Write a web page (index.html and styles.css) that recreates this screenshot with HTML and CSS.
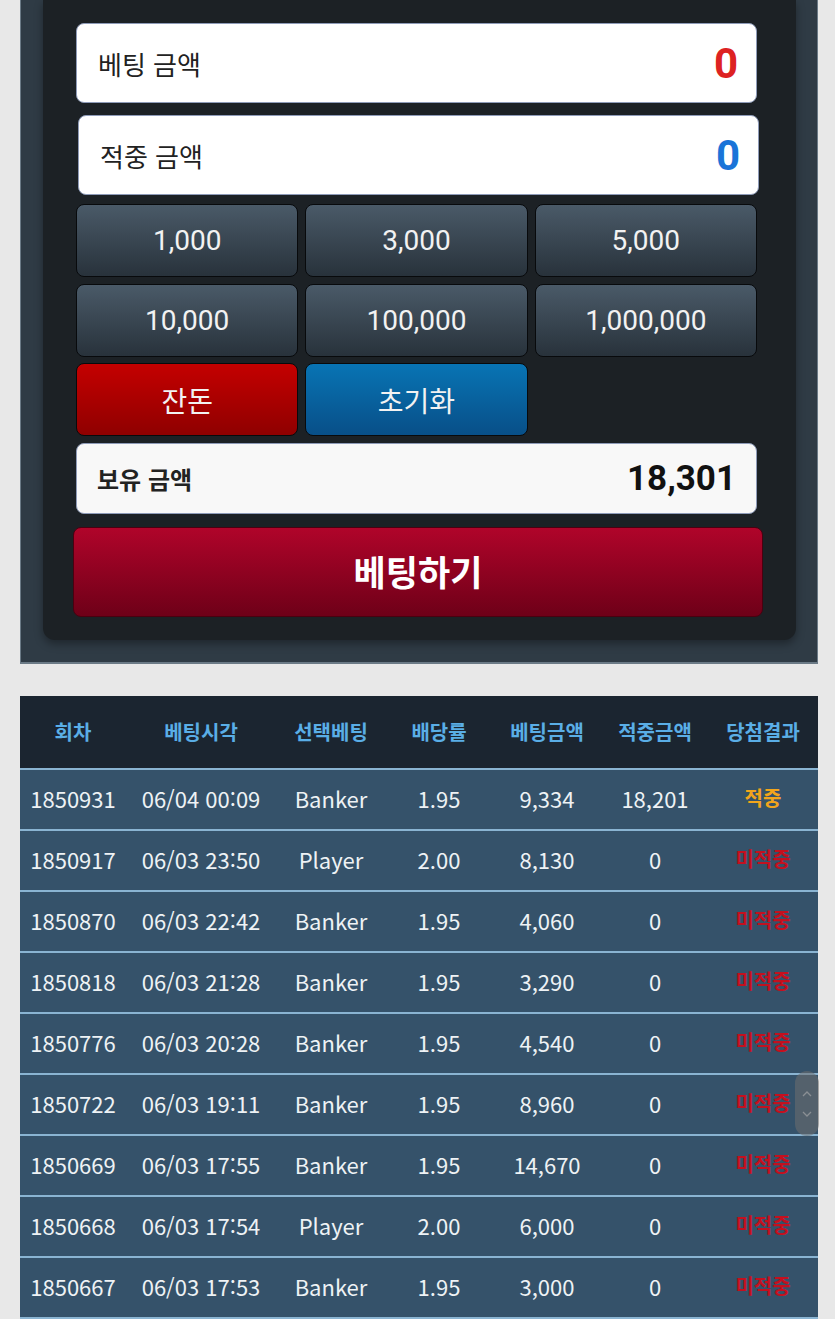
FILE: index.html
```html
<!DOCTYPE html>
<html lang="ko">
<head>
  <meta charset="UTF-8">
  <meta name="viewport" content="width=device-width, initial-scale=1.0">
  <title>베팅</title>
  <link rel="stylesheet" href="styles.css">
</head>
<body>
  <!-- 베팅 패널 -->
  <div class="bet-wrap">
    <div class="bet-panel">
      <div class="amount-box">
        <span class="amount-label">베팅 금액</span>
        <span class="amount-value red">0</span>
      </div>
      <div class="amount-box shifted">
        <span class="amount-label">적중 금액</span>
        <span class="amount-value blue">0</span>
      </div>

      <div class="chip-grid">
        <button class="chip">1,000</button>
        <button class="chip">3,000</button>
        <button class="chip">5,000</button>
        <button class="chip">10,000</button>
        <button class="chip">100,000</button>
        <button class="chip">1,000,000</button>
        <button class="chip chip-red">잔돈</button>
        <button class="chip chip-blue">초기화</button>
      </div>

      <div class="balance-box">
        <span class="balance-label">보유 금액</span>
        <span class="balance-value">18,301</span>
      </div>

      <button class="bet-button">베팅하기</button>
    </div>
  </div>

  <!-- 베팅 내역 -->
  <table class="history">
    <colgroup>
      <col style="width:106px">
      <col style="width:150px">
      <col style="width:110px">
      <col style="width:106px">
      <col style="width:110px">
      <col style="width:106px">
      <col style="width:110px">
    </colgroup>
    <thead>
      <tr>
        <th>회차</th>
        <th>베팅시각</th>
        <th>선택베팅</th>
        <th>배당률</th>
        <th>베팅금액</th>
        <th>적중금액</th>
        <th>당첨결과</th>
      </tr>
    </thead>
    <tbody>
      <tr><td>1850931</td><td>06/04 00:09</td><td>Banker</td><td>1.95</td><td>9,334</td><td>18,201</td><td class="win">적중</td></tr>
      <tr><td>1850917</td><td>06/03 23:50</td><td>Player</td><td>2.00</td><td>8,130</td><td>0</td><td class="lose">미적중</td></tr>
      <tr><td>1850870</td><td>06/03 22:42</td><td>Banker</td><td>1.95</td><td>4,060</td><td>0</td><td class="lose">미적중</td></tr>
      <tr><td>1850818</td><td>06/03 21:28</td><td>Banker</td><td>1.95</td><td>3,290</td><td>0</td><td class="lose">미적중</td></tr>
      <tr><td>1850776</td><td>06/03 20:28</td><td>Banker</td><td>1.95</td><td>4,540</td><td>0</td><td class="lose">미적중</td></tr>
      <tr><td>1850722</td><td>06/03 19:11</td><td>Banker</td><td>1.95</td><td>8,960</td><td>0</td><td class="lose">미적중</td></tr>
      <tr><td>1850669</td><td>06/03 17:55</td><td>Banker</td><td>1.95</td><td>14,670</td><td>0</td><td class="lose">미적중</td></tr>
      <tr><td>1850668</td><td>06/03 17:54</td><td>Player</td><td>2.00</td><td>6,000</td><td>0</td><td class="lose">미적중</td></tr>
      <tr><td>1850667</td><td>06/03 17:53</td><td>Banker</td><td>1.95</td><td>3,000</td><td>0</td><td class="lose">미적중</td></tr>
    </tbody>
  </table>

  <!-- 스크롤 핸들 -->
  <div class="scroll-thumb">
    <svg width="12" height="40" viewBox="0 0 12 40">
      <path d="M2 12 L6 8 L10 12" fill="none" stroke="#8a8f94" stroke-width="1.3"/>
      <path d="M2 28 L6 32 L10 28" fill="none" stroke="#8a8f94" stroke-width="1.3"/>
    </svg>
  </div>
</body>
</html>
```

FILE: styles.css
```css
body {
  background-color: #e8e8e8;
  font-family: "Noto Sans CJK KR", "Noto Sans", sans-serif;
  margin: 0;
  padding: 0;
  height: 1319px;
  overflow: hidden;
}
.bet-wrap {
  width: 798px;
  margin-left: 20px;
  padding: 0 21px 22px 22px;
  box-sizing: border-box;
  background-color: #2f3b45;
  border: 1px solid #6b7a86;
  border-top: none;
  border-bottom-width: 2px;
}
.bet-panel {
  background-color: #1c2125;
  padding: 23px 39px 23px 33px;
  border-radius: 0 0 12px 12px;
  box-shadow: 0 4px 8px rgba(0, 0, 0, 0.35);
}
.amount-box {
  background-color: #fff;
  height: 80px;
  border-radius: 8px;
  border: 1px solid #8e9bb8;
  box-sizing: border-box;
  display: flex;
  align-items: center;
  justify-content: space-between;
  padding: 0 18px 0 21px;
  margin-bottom: 12px;
}
.amount-box.shifted {
  margin-left: 2px;
  margin-right: -2px;
  margin-bottom: 9px;
}
.amount-label {
  font-size: 26px;
  color: #222;
}
.amount-value {
  font-family: Roboto, sans-serif;
  font-weight: bold;
  font-size: 42px;
}
.red {
  color: #dd2222;
}
.blue {
  color: #1a74d8;
}
.chip-grid {
  display: grid;
  grid-template-columns: repeat(3, 1fr);
  grid-auto-rows: 73px;
  column-gap: 7px;
  row-gap: 6.5px;
  margin-bottom: 7px;
}
.chip {
  font-family: Roboto, "Noto Sans CJK KR", sans-serif;
  font-size: 28px;
  color: #f2f2f2;
  border: 1px solid #080a0c;
  border-radius: 8px;
  background: linear-gradient(#4a5a68, #28323b);
  cursor: pointer;
}
.chip-red {
  font-family: "Noto Sans CJK KR", sans-serif;
  font-size: 28px;
  background: linear-gradient(#c40000, #8f0000);
}
.chip-blue {
  font-family: "Noto Sans CJK KR", sans-serif;
  font-size: 28px;
  background: linear-gradient(#0874b4, #084f88);
}
.balance-box {
  background-color: #f8f8f8;
  height: 71px;
  border-radius: 8px;
  border: 1px solid #8e9bb8;
  box-sizing: border-box;
  display: flex;
  align-items: center;
  justify-content: space-between;
  padding: 0 20px 0 20px;
  margin-bottom: 13px;
}
.balance-label {
  font-size: 24px;
  font-weight: bold;
  color: #222;
}
.balance-value {
  font-family: Roboto, sans-serif;
  font-size: 35px;
  font-weight: bold;
  color: #111;
}
.bet-button {
  display: block;
  width: calc(100% + 9px);
  margin-left: -3px;
  height: 90px;
  padding-bottom: 4px;
  font-family: "Noto Sans CJK KR", sans-serif;
  font-size: 35px;
  font-weight: bold;
  color: #fff;
  border: 1px solid #4a0010;
  border-radius: 8px;
  background: linear-gradient(#b0042a, #6e0018);
  cursor: pointer;
}
.history {
  width: 798px;
  margin: 32px 0 0 20px;
  border-collapse: collapse;
  table-layout: fixed;
}
.history th {
  background-color: #1b2530;
  color: #5aaee6;
  font-size: 20px;
  font-weight: bold;
  height: 70px;
  padding: 0 0 2px 0;
  border-bottom: 2px solid #8ab4d2;
}
.history td {
  background-color: #35526a;
  color: #eef2f5;
  font-size: 22px;
  text-align: center;
  height: 55px;
  padding: 0 0 4px 0;
  border-bottom: 2px solid #8ab4d2;
}
.history td.win {
  color: #f2a51c;
  font-weight: bold;
  font-size: 20px;
}
.history td.lose {
  color: #c4101e;
  font-weight: bold;
  font-size: 20px;
}
/* 스크롤 핸들 */
.scroll-thumb {
  position: absolute;
  left: 795px;
  top: 1071px;
  width: 24px;
  height: 65px;
  border-radius: 12px;
  background-color: rgba(110, 110, 110, 0.55);
  display: flex;
  justify-content: center;
  align-items: center;
}
```
